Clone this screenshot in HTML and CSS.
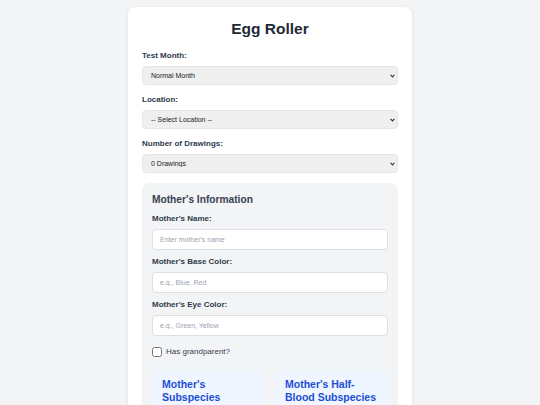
FILE: index.html
```html
<!DOCTYPE html>
<html lang="en">
<head>
<meta charset="utf-8">
<title>Egg Roller</title>
<link rel="stylesheet" href="styles.css">
</head>
<body>
<div class="card">
  <h1 class="title">Egg Roller</h1>

  <div class="field">
    <label class="label" for="month">Test Month:</label>
    <div class="select-wrap">
      <select id="month" class="select">
        <option>Normal Month</option>
      </select>
      <svg class="chev" width="5" height="4" viewBox="0 0 5 4"><path d="M0.6 0.8 L2.5 2.9 L4.4 0.8" fill="none" stroke="#333" stroke-width="1.1"/></svg>
    </div>
  </div>

  <div class="field">
    <label class="label" for="location">Location:</label>
    <div class="select-wrap">
      <select id="location" class="select">
        <option>-- Select Location --</option>
      </select>
      <svg class="chev" width="5" height="4" viewBox="0 0 5 4"><path d="M0.6 0.8 L2.5 2.9 L4.4 0.8" fill="none" stroke="#333" stroke-width="1.1"/></svg>
    </div>
  </div>

  <div class="field">
    <label class="label" for="drawings">Number of Drawings:</label>
    <div class="select-wrap">
      <select id="drawings" class="select">
        <option>0 Drawings</option>
      </select>
      <svg class="chev" width="5" height="4" viewBox="0 0 5 4"><path d="M0.6 0.8 L2.5 2.9 L4.4 0.8" fill="none" stroke="#333" stroke-width="1.1"/></svg>
    </div>
  </div>

  <section class="parent">
    <h2 class="parent-title">Mother's Information</h2>

    <div class="pfield">
      <label class="label" for="mname">Mother's Name:</label>
      <input id="mname" class="input" type="text" placeholder="Enter mother's name">
    </div>
    <div class="pfield">
      <label class="label" for="mbase">Mother's Base Color:</label>
      <input id="mbase" class="input" type="text" placeholder="e.g., Blue, Red">
    </div>
    <div class="pfield">
      <label class="label" for="meye">Mother's Eye Color:</label>
      <input id="meye" class="input" type="text" placeholder="e.g., Green, Yellow">
    </div>

    <label class="check">
      <input type="checkbox" class="checkbox">
      <span>Has grandparent?</span>
    </label>

    <div class="subs">
      <div class="sub">
        <h3 class="sub-title">Mother's Subspecies</h3>
      </div>
      <div class="sub">
        <h3 class="sub-title">Mother's Half-Blood Subspecies</h3>
      </div>
    </div>
  </section>
</div>
</body>
</html>
```

FILE: styles.css
```css
* { box-sizing: border-box; }

html, body {
  margin: 0;
  background: #f3f4f6;
  font-family: "Liberation Sans", Arial, sans-serif;
  color: #374151;
}

body {
  padding-top: 7px;
}

.card {
  width: 284px;
  margin: 0 auto;
  background: #ffffff;
  border-radius: 8px;
  box-shadow: 0 1px 4px rgba(0, 0, 0, 0.08);
  padding: 14px 14px 20px;
  min-height: 420px;
}

.title {
  margin: 0 0 14px;
  font-size: 15.5px;
  line-height: 16px;
  font-weight: 700;
  text-align: center;
  color: #1f2937;
}

.field {
  margin-bottom: 10px;
}

.label {
  display: block;
  font-size: 8px;
  line-height: 10px;
  font-weight: 700;
  color: #2f3a4a;
  margin-bottom: 5px;
}

.select-wrap {
  position: relative;
}

.select {
  display: block;
  width: 100%;
  height: 19px;
  -webkit-appearance: none;
  appearance: none;
  font-family: "Liberation Sans", Arial, sans-serif;
  font-size: 7px;
  color: #222;
  background-color: #efefef;
  border: 1px solid #e6e6e6;
  border-radius: 4px;
  padding: 0 8px;
}

.chev {
  position: absolute;
  right: 3px;
  top: 8px;
  pointer-events: none;
}

.parent {
  background: #f3f4f6;
  border-radius: 8px;
  padding: 10px 10px 10px;
}

.parent-title {
  margin: 0 0 7px;
  font-size: 10.2px;
  line-height: 14px;
  font-weight: 700;
  color: #374151;
}

.pfield {
  margin-bottom: 7px;
}

.input {
  display: block;
  width: 100%;
  height: 21px;
  font-family: "Liberation Sans", Arial, sans-serif;
  font-size: 7px;
  color: #222;
  background: #ffffff;
  border: 1px solid #dcdfe4;
  border-radius: 4px;
  padding: 0 7px;
}

.input::placeholder {
  color: #9ca3af;
}

.check {
  display: flex;
  align-items: center;
  gap: 4px;
  margin-top: 11px;
  font-size: 8px;
  line-height: 10px;
  color: #374151;
}

.checkbox {
  margin: 0;
  width: 10px;
  height: 10px;
}

.subs {
  display: grid;
  grid-template-columns: 1fr 1fr;
  gap: 10px;
  margin-top: 13px;
}

.sub {
  background: #eff6ff;
  border-radius: 6px;
  padding: 8px 10px;
  min-height: 60px;
}

.sub-title {
  margin: 0;
  font-size: 10.5px;
  line-height: 13px;
  font-weight: 700;
  color: #1d4ed8;
}
```
